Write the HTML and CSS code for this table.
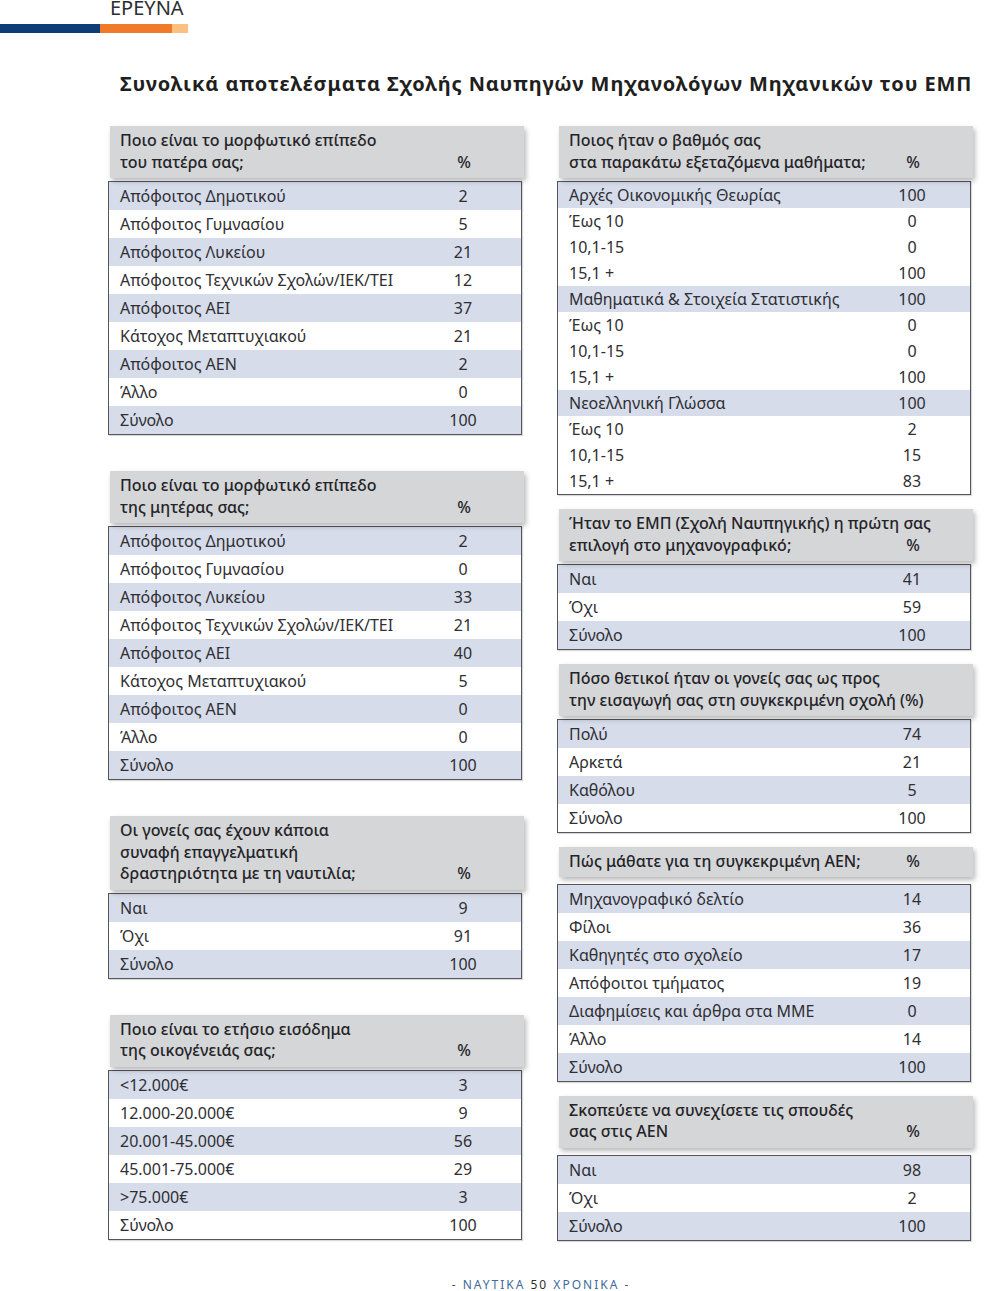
FILE: index.html
```html
<!DOCTYPE html>
<html lang="el">
<head>
<meta charset="utf-8">
<title>Έρευνα</title>
<link rel="stylesheet" href="styles.css">
</head>
<body>
<header class="masthead">
  <div class="section-name">ΕΡΕΥΝΑ</div>
  <div class="bars"><span class="bar-blue"></span><span class="bar-orange"></span><span class="bar-light"></span></div>
</header>

<h1 class="title">Συνολικά αποτελέσματα Σχολής Ναυπηγών Μηχανολόγων Μηχανικών του ΕΜΠ</h1>

<main class="columns">
  <div class="col col-left">
    <section class="tbl">
      <div class="thead"><div class="q">Ποιο είναι το μορφωτικό επίπεδο<br>του πατέρα σας;</div><div class="v">%</div></div>
      <div class="tbody">
        <div class="row hl"><span class="l">Απόφοιτος Δημοτικού</span><span class="v">2</span></div>
        <div class="row"><span class="l">Απόφοιτος Γυμνασίου</span><span class="v">5</span></div>
        <div class="row hl"><span class="l">Απόφοιτος Λυκείου</span><span class="v">21</span></div>
        <div class="row"><span class="l">Απόφοιτος Τεχνικών Σχολών/ΙΕΚ/ΤΕΙ</span><span class="v">12</span></div>
        <div class="row hl"><span class="l">Απόφοιτος ΑΕΙ</span><span class="v">37</span></div>
        <div class="row"><span class="l">Κάτοχος Μεταπτυχιακού</span><span class="v">21</span></div>
        <div class="row hl"><span class="l">Απόφοιτος ΑΕΝ</span><span class="v">2</span></div>
        <div class="row"><span class="l">Άλλο</span><span class="v">0</span></div>
        <div class="row hl"><span class="l">Σύνολο</span><span class="v">100</span></div>
      </div>
    </section>

    <section class="tbl">
      <div class="thead"><div class="q">Ποιο είναι το μορφωτικό επίπεδο<br>της μητέρας σας;</div><div class="v">%</div></div>
      <div class="tbody">
        <div class="row hl"><span class="l">Απόφοιτος Δημοτικού</span><span class="v">2</span></div>
        <div class="row"><span class="l">Απόφοιτος Γυμνασίου</span><span class="v">0</span></div>
        <div class="row hl"><span class="l">Απόφοιτος Λυκείου</span><span class="v">33</span></div>
        <div class="row"><span class="l">Απόφοιτος Τεχνικών Σχολών/ΙΕΚ/ΤΕΙ</span><span class="v">21</span></div>
        <div class="row hl"><span class="l">Απόφοιτος ΑΕΙ</span><span class="v">40</span></div>
        <div class="row"><span class="l">Κάτοχος Μεταπτυχιακού</span><span class="v">5</span></div>
        <div class="row hl"><span class="l">Απόφοιτος ΑΕΝ</span><span class="v">0</span></div>
        <div class="row"><span class="l">Άλλο</span><span class="v">0</span></div>
        <div class="row hl"><span class="l">Σύνολο</span><span class="v">100</span></div>
      </div>
    </section>

    <section class="tbl">
      <div class="thead"><div class="q">Οι γονείς σας έχουν κάποια<br>συναφή επαγγελματική<br>δραστηριότητα με τη ναυτιλία;</div><div class="v">%</div></div>
      <div class="tbody">
        <div class="row hl"><span class="l">Ναι</span><span class="v">9</span></div>
        <div class="row"><span class="l">Όχι</span><span class="v">91</span></div>
        <div class="row hl"><span class="l">Σύνολο</span><span class="v">100</span></div>
      </div>
    </section>

    <section class="tbl">
      <div class="thead"><div class="q">Ποιο είναι το ετήσιο εισόδημα<br>της οικογένειάς σας;</div><div class="v">%</div></div>
      <div class="tbody">
        <div class="row hl"><span class="l">&lt;12.000€</span><span class="v">3</span></div>
        <div class="row"><span class="l">12.000-20.000€</span><span class="v">9</span></div>
        <div class="row hl"><span class="l">20.001-45.000€</span><span class="v">56</span></div>
        <div class="row"><span class="l">45.001-75.000€</span><span class="v">29</span></div>
        <div class="row hl"><span class="l">&gt;75.000€</span><span class="v">3</span></div>
        <div class="row"><span class="l">Σύνολο</span><span class="v">100</span></div>
      </div>
    </section>
  </div>

  <div class="col col-right">
    <section class="tbl">
      <div class="thead"><div class="q">Ποιος ήταν ο βαθμός σας<br>στα παρακάτω εξεταζόμενα μαθήματα;</div><div class="v">%</div></div>
      <div class="tbody compact">
        <div class="row hl"><span class="l">Αρχές Οικονομικής Θεωρίας</span><span class="v">100</span></div>
        <div class="row"><span class="l">Έως 10</span><span class="v">0</span></div>
        <div class="row"><span class="l">10,1-15</span><span class="v">0</span></div>
        <div class="row"><span class="l">15,1 +</span><span class="v">100</span></div>
        <div class="row hl"><span class="l">Μαθηματικά &amp; Στοιχεία Στατιστικής</span><span class="v">100</span></div>
        <div class="row"><span class="l">Έως 10</span><span class="v">0</span></div>
        <div class="row"><span class="l">10,1-15</span><span class="v">0</span></div>
        <div class="row"><span class="l">15,1 +</span><span class="v">100</span></div>
        <div class="row hl"><span class="l">Νεοελληνική Γλώσσα</span><span class="v">100</span></div>
        <div class="row"><span class="l">Έως 10</span><span class="v">2</span></div>
        <div class="row"><span class="l">10,1-15</span><span class="v">15</span></div>
        <div class="row"><span class="l">15,1 +</span><span class="v">83</span></div>
      </div>
    </section>

    <section class="tbl">
      <div class="thead"><div class="q">Ήταν το ΕΜΠ (Σχολή Ναυπηγικής) η πρώτη σας<br>επιλογή στο μηχανογραφικό;</div><div class="v">%</div></div>
      <div class="tbody">
        <div class="row hl"><span class="l">Ναι</span><span class="v">41</span></div>
        <div class="row"><span class="l">Όχι</span><span class="v">59</span></div>
        <div class="row hl"><span class="l">Σύνολο</span><span class="v">100</span></div>
      </div>
    </section>

    <section class="tbl">
      <div class="thead"><div class="q">Πόσο θετικοί ήταν οι γονείς σας ως προς<br>την εισαγωγή σας στη συγκεκριμένη σχολή (%)</div></div>
      <div class="tbody">
        <div class="row hl"><span class="l">Πολύ</span><span class="v">74</span></div>
        <div class="row"><span class="l">Αρκετά</span><span class="v">21</span></div>
        <div class="row hl"><span class="l">Καθόλου</span><span class="v">5</span></div>
        <div class="row"><span class="l">Σύνολο</span><span class="v">100</span></div>
      </div>
    </section>

    <section class="tbl">
      <div class="thead single"><div class="q">Πώς μάθατε για τη συγκεκριμένη ΑΕΝ;</div><div class="v">%</div></div>
      <div class="tbody wide-gap">
        <div class="row hl"><span class="l">Μηχανογραφικό δελτίο</span><span class="v">14</span></div>
        <div class="row"><span class="l">Φίλοι</span><span class="v">36</span></div>
        <div class="row hl"><span class="l">Καθηγητές στο σχολείο</span><span class="v">17</span></div>
        <div class="row"><span class="l">Απόφοιτοι τμήματος</span><span class="v">19</span></div>
        <div class="row hl"><span class="l">Διαφημίσεις και άρθρα στα ΜΜΕ</span><span class="v">0</span></div>
        <div class="row"><span class="l">Άλλο</span><span class="v">14</span></div>
        <div class="row hl"><span class="l">Σύνολο</span><span class="v">100</span></div>
      </div>
    </section>

    <section class="tbl">
      <div class="thead"><div class="q">Σκοπεύετε να συνεχίσετε τις σπουδές<br>σας στις ΑΕΝ</div><div class="v">%</div></div>
      <div class="tbody wide-gap">
        <div class="row hl"><span class="l">Ναι</span><span class="v">98</span></div>
        <div class="row"><span class="l">Όχι</span><span class="v">2</span></div>
        <div class="row hl"><span class="l">Σύνολο</span><span class="v">100</span></div>
      </div>
    </section>
  </div>
</main>

<footer class="footer"><span class="dash">-</span> ΝΑΥΤΙΚΑ <span class="num">50</span> ΧΡΟΝΙΚΑ <span class="dash">-</span></footer>
</body>
</html>
```

FILE: styles.css
```css
* { box-sizing: border-box; }

html, body {
  margin: 0;
  padding: 0;
  background: #ffffff;
}

body {
  position: relative;
  width: 990px;
  height: 1291px;
  overflow: hidden;
  font-family: "Noto Sans", "DejaVu Sans", sans-serif;
  color: #2f2f33;
}

.section-name {
  margin-top: -4px;
  padding-left: 110px;
  font-size: 20px;
  line-height: 24px;
  font-weight: 400;
  letter-spacing: 0;
  color: #2e2e30;
}

.bars {
  display: flex;
  height: 9px;
  margin-top: 4px;
}

.bar-blue { width: 100px; background: #0d3d74; }
.bar-orange { width: 72px; background: #f07a2a; }
.bar-light { width: 16px; background: #fbbf80; }

.title {
  margin: 38px 0 0 120px;
  font-size: 20px;
  line-height: 26px;
  font-weight: 700;
  color: #1f1f22;
  letter-spacing: 0.9px;
  white-space: nowrap;
}

.columns {
  display: grid;
  grid-template-columns: 414px 414px;
  column-gap: 35px;
  padding-left: 108px;
  margin-top: 29px;
  align-items: start;
}

.col {
  display: flex;
  flex-direction: column;
}

.col-left { gap: 36px; }
.col-right { gap: 14px; }

.tbl { display: flex; flex-direction: column; }

.thead {
  display: flex;
  align-items: flex-end;
  margin-left: 2px;
  margin-right: -2px;
  padding: 4px 20px 5px 10px;
  background: #d5d6d8;
  box-shadow: 2px 3px 5px rgba(0, 0, 0, 0.28);
  font-size: 16px;
  line-height: 21.5px;
  font-weight: 500;
  color: #242428;
  position: relative;
  z-index: 1;
}

.thead.single {
  padding-top: 4px;
  padding-bottom: 4px;
}

.thead .q {
  flex: 1;
  min-width: 0;
  white-space: nowrap;
}

.thead .v {
  width: 80px;
  text-align: center;
  flex: none;
}

.tbody {
  margin-top: 3px;
  border: 1px solid #55565c;
  box-shadow: 1px 1px 1px rgba(0, 0, 0, 0.15);
}

.tbody.wide-gap { margin-top: 7px; }

.row {
  display: flex;
  align-items: center;
  height: 28px;
  padding: 0 18px 0 11px;
  font-size: 16px;
  font-weight: 400;
  color: #2f2f33;
}

.tbody.compact .row { height: 26px; }

.row.hl { background: #d6dcea; }

.row .l { flex: 1; white-space: nowrap; }

.row .v {
  width: 80px;
  text-align: center;
  flex: none;
}

.footer {
  position: absolute;
  left: 0;
  width: 990px;
  top: 1277px;
  padding-left: 92px;
  text-align: center;
  font-size: 12px;
  line-height: 16px;
  letter-spacing: 2px;
  color: #3d6b9a;
}

.footer .num { color: #2e2e30; }
.footer .dash { color: #555; }
```
